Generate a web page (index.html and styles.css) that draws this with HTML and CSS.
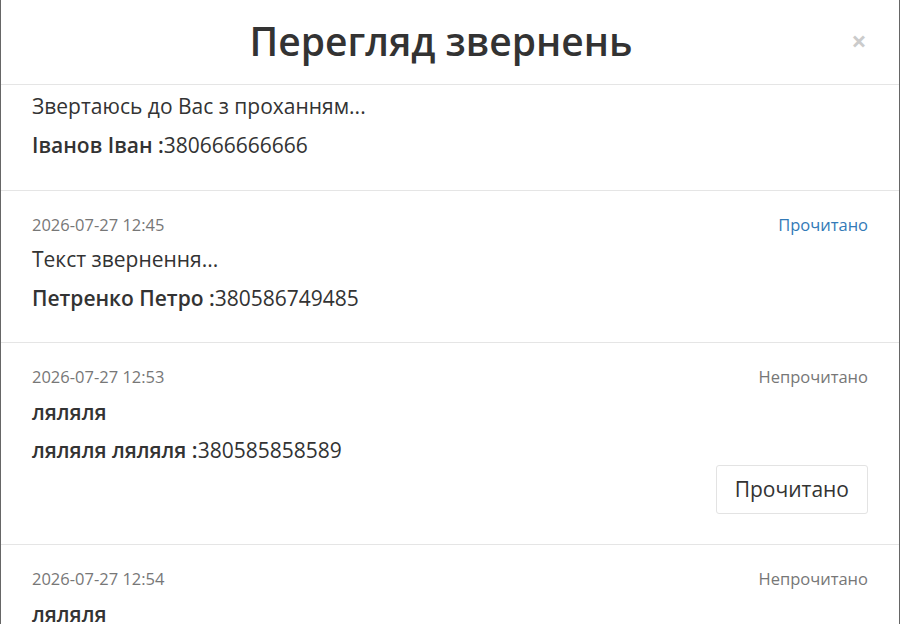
FILE: index.html
```html
<!DOCTYPE html>
<html lang="uk">
  <head>
    <meta charset="UTF-8" />
    <meta name="viewport" content="width=device-width, initial-scale=1.0" />
    <title>Перегляд звернень</title>
    <link rel="stylesheet" href="styles.css">
  </head>
  <body>
    <div class="modal">
      <header class="modal_header">
        <h2 class="modal_title">Перегляд звернень</h2>
        <button class="modal_close" type="button" aria-label="Закрити">&times;</button>
      </header>

      <div class="modal_body" id="appeals">
        <div class="appeal">
          <div class="appeal_meta">
            <span class="appeal_date">2026-07-27 12:40</span>
            <span class="appeal_status read">Прочитано</span>
          </div>
          <p class="appeal_text">Звертаюсь до Вас з проханням...</p>
          <p class="appeal_author"><b>Іванов Іван :</b>380666666666</p>
        </div>

        <div class="appeal">
          <div class="appeal_meta">
            <span class="appeal_date">2026-07-27 12:45</span>
            <span class="appeal_status read">Прочитано</span>
          </div>
          <p class="appeal_text">Текст звернення...</p>
          <p class="appeal_author"><b>Петренко Петро :</b>380586749485</p>
        </div>

        <div class="appeal">
          <div class="appeal_meta">
            <span class="appeal_date">2026-07-27 12:53</span>
            <span class="appeal_status">Непрочитано</span>
          </div>
          <p class="appeal_text"><b>ляляля</b></p>
          <p class="appeal_author"><b>ляляля ляляля :</b>380585858589</p>
          <div class="appeal_actions">
            <button class="btn" type="button">Прочитано</button>
          </div>
        </div>

        <div class="appeal">
          <div class="appeal_meta">
            <span class="appeal_date">2026-07-27 12:54</span>
            <span class="appeal_status">Непрочитано</span>
          </div>
          <p class="appeal_text"><b>ляляля</b></p>
          <p class="appeal_author"><b>ляляля ляляля :</b>380585858589</p>
          <div class="appeal_actions">
            <button class="btn" type="button">Прочитано</button>
          </div>
        </div>
      </div>
    </div>

    <script>
      document.getElementById("appeals").scrollTop = 47;
    </script>
  </body>
</html>
```

FILE: styles.css
```css
/* variables */
:root {
  --textColor: #333;
  --mutedColor: #777;
  --linkColor: #337ab7;
  --lineColor: #e5e5e5;
}

/* base */
*,
::before,
::after {
  box-sizing: border-box;
  margin: 0;
  padding: 0;
}
html,
body {
  height: 100%;
}
body {
  font-family: "Open Sans", "Noto Sans", sans-serif;
  color: var(--textColor);
  background-color: #fff;
  overflow: hidden;
}
b {
  font-weight: 600;
}

/* modal */
.modal {
  display: flex;
  flex-direction: column;
  height: 100%;
  background-color: #fff;
  border-left: 1px solid #666;
  border-right: 1px solid #666;
}
.modal_header {
  display: flex;
  align-items: center;
  height: 85px;
  padding: 0 31px;
  border-bottom: 1px solid var(--lineColor);
  flex-shrink: 0;
}
.modal_title {
  flex: 1;
  text-align: center;
  font-size: 39px;
  font-weight: 600;
  line-height: 1.1;
  padding-bottom: 2px;
}
.modal_close {
  width: 18px;
  border: 0;
  background: none;
  font-family: inherit;
  font-size: 27px;
  font-weight: 700;
  line-height: 1;
  color: #000;
  opacity: 0.2;
  padding-bottom: 4px;
  cursor: pointer;
}
.modal_body {
  flex: 1;
  overflow: hidden;
}

/* appeals list */
.appeal {
  padding: 23px 31px 30px;
  border-bottom: 1px solid var(--lineColor);
}
.appeal_meta {
  display: flex;
  justify-content: space-between;
  font-size: 16.5px;
  line-height: 21.4px;
  margin-bottom: 10px;
  color: var(--mutedColor);
}
.appeal_status.read {
  color: var(--linkColor);
}
.appeal_text,
.appeal_author {
  font-size: 21px;
  line-height: 28.6px;
}
.appeal_text {
  margin-bottom: 10px;
}
.appeal_actions {
  display: flex;
  justify-content: flex-end;
}
.btn {
  font-family: inherit;
  font-size: 21px;
  line-height: 28.6px;
  color: var(--textColor);
  background-color: #fff;
  border: 1px solid #e3e3e3;
  border-radius: 3px;
  padding: 9px 18px 10px;
  cursor: pointer;
}
```
